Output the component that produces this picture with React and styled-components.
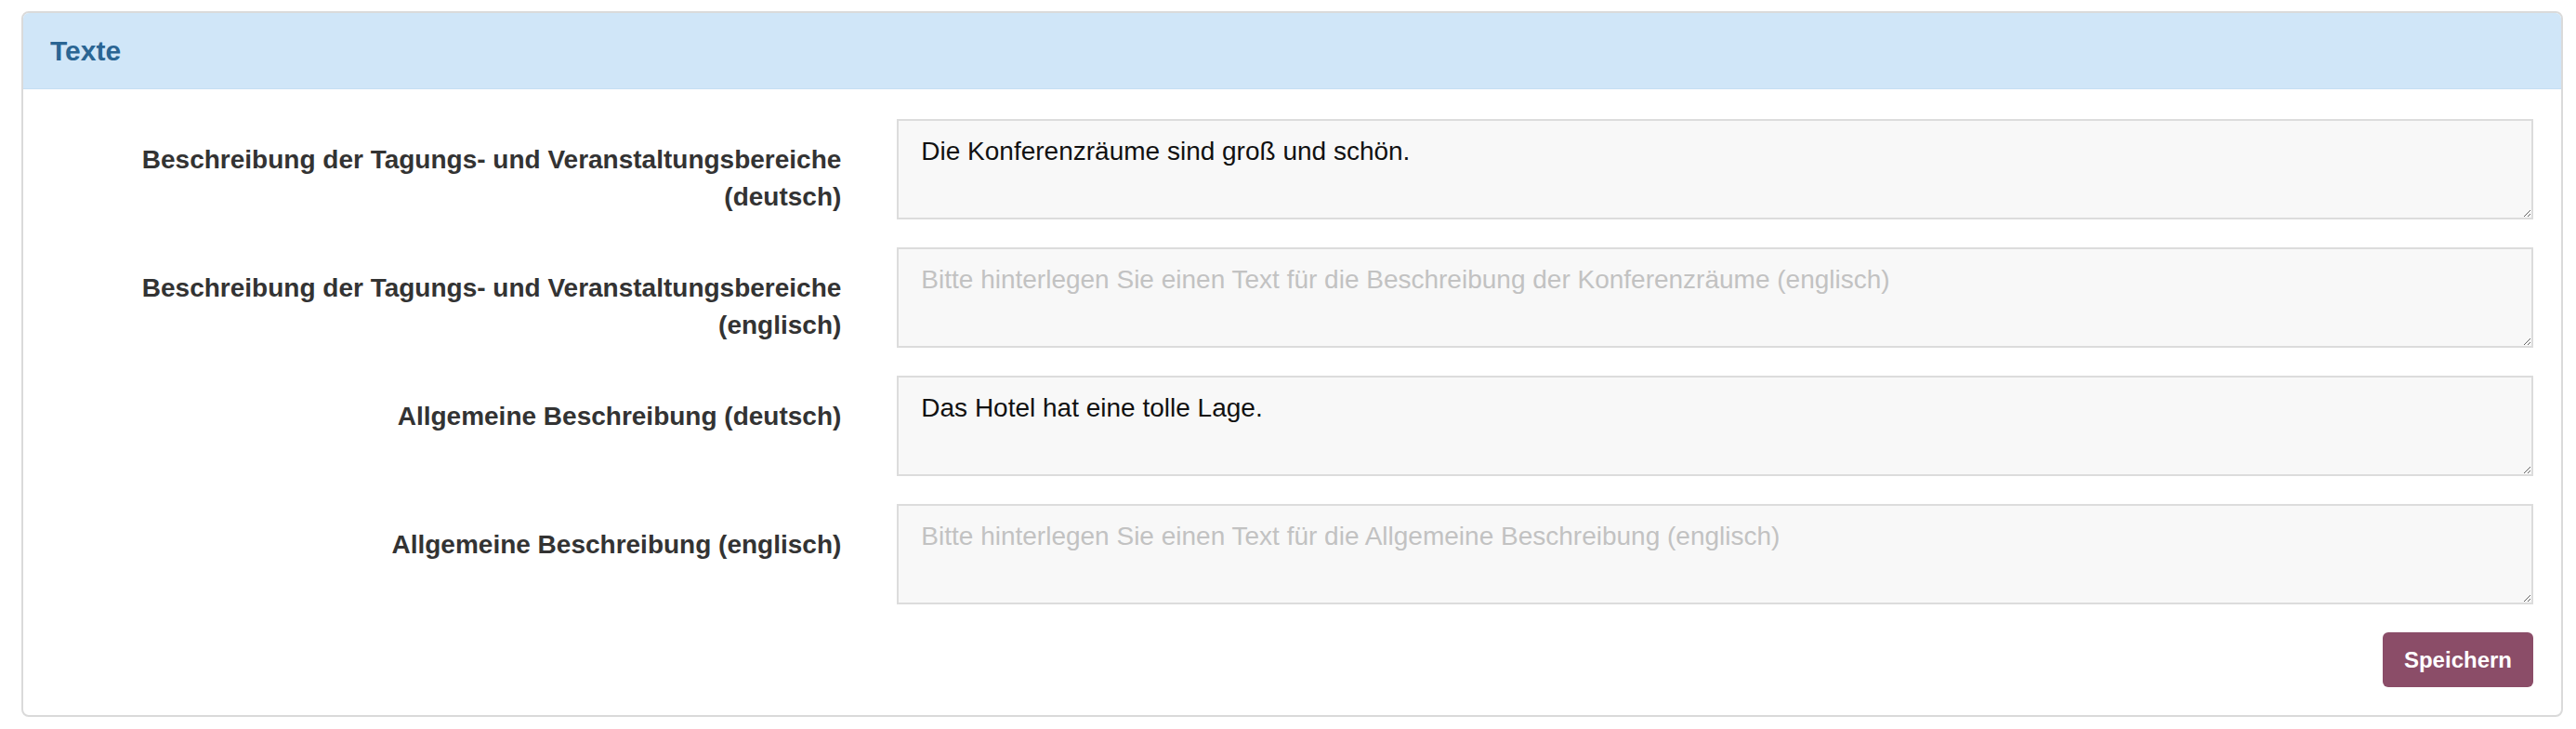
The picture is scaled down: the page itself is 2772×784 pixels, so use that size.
import React from "react";
import styled, { createGlobalStyle } from "styled-components";

// GLOBAL //

const GlobalStyle = createGlobalStyle`
  html, body {
    margin: 0;
    padding: 0;
    background: #ffffff;
  }
  body {
    font-family: "Liberation Sans", Arial, Helvetica, sans-serif;
    color: #333333;
  }
`;

// PANEL //

const Page = styled.div`
  padding: 12px 14px 0 23px;
`;

const Panel = styled.section`
  border: 2px solid #dadada;
  border-radius: 8px;
  background: #ffffff;
  overflow: hidden;
`;

const PanelHeading = styled.header`
  height: 81px;
  display: flex;
  align-items: center;
  padding: 0 29px;
  background-color: #d0e6f8;
  border-bottom: 1px solid #c6dff3;
`;

const PanelTitle = styled.h3`
  margin: 0;
  font-size: 30px;
  font-weight: bold;
  color: #2a6593;
`;

const PanelBody = styled.div`
  padding: 32px 0 30px;
  display: flex;
  flex-direction: column;
  gap: 30px;
`;

// FORM //

const FormRow = styled.div`
  display: grid;
  grid-template-columns: 1fr 2fr;
`;

const Label = styled.label`
  padding: 24px 30px 0;
  text-align: right;
  font-size: 28px;
  line-height: 40px;
  font-weight: bold;
  color: #333333;
`;

const Field = styled.div`
  padding: 0 30px;
`;

const TextArea = styled.textarea`
  display: block;
  box-sizing: border-box;
  width: 100%;
  height: 108px;
  margin: 0;
  padding: 13px 24px;
  border: 2px solid #dcdcdc;
  border-radius: 0;
  background-color: #f8f8f8;
  font-family: "Liberation Sans", Arial, Helvetica, sans-serif;
  font-size: 28px;
  line-height: 40px;
  color: #111111;
  resize: vertical;
  outline: none;

  &::placeholder {
    color: #c2c2c2;
  }
`;

const Actions = styled.div`
  display: flex;
  justify-content: flex-end;
  padding: 0 30px;
`;

const Button = styled.button`
  height: 59px;
  padding: 0 23px;
  border: none;
  border-radius: 6px;
  background-color: ${props => props.color};
  color: #ffffff;
  font-family: "Liberation Sans", Arial, Helvetica, sans-serif;
  font-size: 24px;
  font-weight: bold;
  cursor: pointer;
`;

const fields = [
  {
    id: "conf_de",
    label: "Beschreibung der Tagungs- und Veranstaltungsbereiche (deutsch)",
    value: "Die Konferenzräume sind groß und schön.",
    placeholder: "Bitte hinterlegen Sie einen Text für die Beschreibung der Konferenzräume (deutsch)"
  },
  {
    id: "conf_en",
    label: "Beschreibung der Tagungs- und Veranstaltungsbereiche (englisch)",
    value: "",
    placeholder: "Bitte hinterlegen Sie einen Text für die Beschreibung der Konferenzräume (englisch)"
  },
  {
    id: "general_de",
    label: "Allgemeine Beschreibung (deutsch)",
    value: "Das Hotel hat eine tolle Lage.",
    placeholder: "Bitte hinterlegen Sie einen Text für die Allgemeine Beschreibung (deutsch)"
  },
  {
    id: "general_en",
    label: "Allgemeine Beschreibung (englisch)",
    value: "",
    placeholder: "Bitte hinterlegen Sie einen Text für die Allgemeine Beschreibung (englisch)"
  }
];

const App = () => {
  return (
    <Page>
      <GlobalStyle />
      <Panel>
        <PanelHeading>
          <PanelTitle>Texte</PanelTitle>
        </PanelHeading>
        <PanelBody>
          {fields.map(f => (
            <FormRow key={f.id}>
              <Label htmlFor={f.id}>{f.label}</Label>
              <Field>
                <TextArea
                  id={f.id}
                  defaultValue={f.value}
                  placeholder={f.placeholder}
                />
              </Field>
            </FormRow>
          ))}
          <Actions>
            <Button color="#8b4d68">Speichern</Button>
          </Actions>
        </PanelBody>
      </Panel>
    </Page>
  );
};

export default App;
